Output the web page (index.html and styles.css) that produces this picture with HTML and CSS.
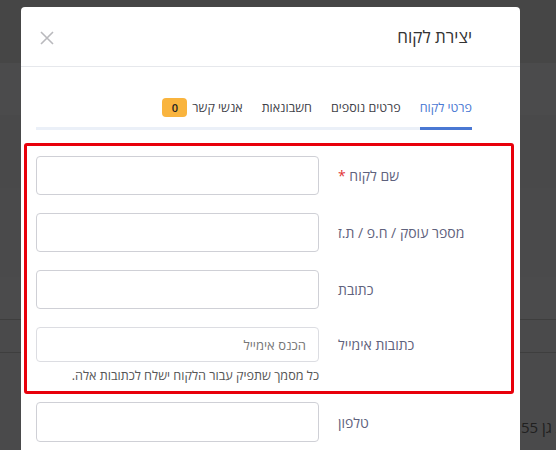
FILE: index.html
```
<!DOCTYPE html>
<html lang="he" dir="rtl">
<head>
<meta charset="utf-8">
<link rel="stylesheet" href="styles.css">
</head>
<body>
<div class="backdrop">
  <div class="band b1"></div>
  <div class="band b2"></div>
  <div class="band b3"></div>
  <div class="band b4"></div>
  <div class="band b5"></div>
  <div class="band b6"></div>
  <div class="band b7"></div>
  <div class="band b8"><span class="behind">רמת גן 55</span></div>
</div>

<div class="modal">
  <div class="modal-header">
    <h1 class="title">יצירת לקוח</h1>
    <svg class="close" width="14" height="14" viewBox="0 0 14 14"><path d="M1 1L13 13M13 1L1 13" stroke="#b9b9bd" stroke-width="1.6" fill="none"/></svg>
  </div>
  <div class="modal-body">
    <ul class="tabs">
      <li class="tab active">פרטי לקוח</li>
      <li class="tab">פרטים נוספים</li>
      <li class="tab">חשבונאות</li>
      <li class="tab">אנשי קשר <span class="badge">0</span></li>
    </ul>
    <form class="form">
      <div class="row">
        <label class="label">שם לקוח <span class="req">*</span></label>
        <input class="input" type="text">
      </div>
      <div class="row">
        <label class="label">מספר עוסק / ח.פ / ת.ז</label>
        <input class="input" type="text">
      </div>
      <div class="row">
        <label class="label">כתובת</label>
        <input class="input" type="text">
      </div>
      <div class="row email-row">
        <label class="label">כתובות אימייל</label>
        <div class="field">
          <input class="input input-sm" type="text" placeholder="הכנס אימייל">
          <div class="help">כל מסמך שתפיק עבור הלקוח ישלח לכתובות אלה.</div>
        </div>
      </div>
      <div class="row phone-row">
        <label class="label">טלפון</label>
        <input class="input" type="text">
      </div>
    </form>
  </div>
  <div class="highlight"></div>
</div>
</body>
</html>
```
FILE: styles.css
```
* { box-sizing: border-box; }
html, body { margin: 0; padding: 0; }
body {
  width: 556px;
  height: 450px;
  overflow: hidden;
  background: #4a4a4b;
  font-family: "Open Sans", "Liberation Sans", sans-serif;
  position: relative;
}
.backdrop { display: flex; flex-direction: column; }
.band { width: 100%; }
.b1 { height: 63px; background: #464646; }
.b2 { height: 52px; background: #4b4b4c; }
.b3 { height: 73px; background: #49494a; }
.b4 { height: 89px; background: #4a4a4b; }
.b5 { height: 43px; background: #4b4b4c; border-bottom: 1px solid #3e3e3e; }
.b6 { height: 33px; background: #4a4a4b; border-bottom: 1px solid #3e3e3e; }
.b7 { height: 59px; background: #4a4a4b; }
.b8 { height: 40px; background: #4a4a4b; position: relative; }
.behind {
  position: absolute;
  left: 521px;
  top: 5px;
  white-space: nowrap;
  color: #202020;
  font-size: 15px;
  direction: rtl;
}

.modal {
  position: absolute;
  left: 21px;
  top: 7px;
  width: 499px;
  height: 460px;
  background: #fff;
  border-radius: 4px;
}
.modal-header {
  height: 60px;
  border-bottom: 1px solid #e6e8ec;
  display: flex;
  align-items: center;
  justify-content: space-between;
  padding: 0 48px 0 19px;
}
.title {
  margin: 0;
  font-size: 17px;
  font-weight: 400;
  color: #333;
}
.close { display: block; margin-top: 2px; }

.modal-body { padding: 20px 48px 0 15px; }
.tabs {
  list-style: none;
  margin: 0;
  padding: 0;
  display: flex;
  border-bottom: 3px solid #ebf0f8;
  height: 43px;
}
.tab {
  font-size: 12.5px;
  font-weight: 500;
  color: #3f4249;
  padding: 12px 0 0;
  margin-left: 19px;
  display: flex;
  align-items: flex-start;
  gap: 5px;
  height: 43px;
}
.tab.active {
  color: #4a78d3;
  border-bottom: 3px solid #4a78d3;
  margin-bottom: -3px;
}
.badge {
  display: inline-block;
  background: #f9b43e;
  color: #222;
  font-size: 11px;
  font-weight: 600;
  border-radius: 4px;
  width: 25px;
  height: 19px;
  line-height: 19px;
  text-align: center;
  margin-top: -1px;
}

.form {
  margin-top: 26px;
  display: flex;
  flex-direction: column;
  gap: 18px;
}
.row {
  display: grid;
  grid-template-columns: 134px 283px;
  column-gap: 19px;
  align-items: center;
}
.label {
  text-align: left;
  font-size: 14px;
  color: #5f627d;
  white-space: nowrap;
}
.req { color: #e23636; }
.input {
  display: block;
  width: 283px;
  height: 39px;
  border: 1px solid #cfd0d6;
  border-radius: 4px;
  background: #fff;
  font: inherit;
  font-size: 13px;
  padding: 0 12px;
  direction: rtl;
}
.input-sm { height: 35px; border-color: #dcdde2; }
.input::placeholder { color: #777; }
.email-row { align-items: start; }
.email-row .label { padding-top: 8px; }
.help {
  font-size: 12.6px;
  line-height: 17px;
  color: #555;
  margin-top: 5px;
  text-align: right;
}
.phone-row .input { height: 40px; }

.highlight {
  position: absolute;
  left: 3px;
  top: 136px;
  width: 490px;
  height: 251px;
  border: 3px solid #e8000b;
  border-radius: 3px;
  pointer-events: none;
}
```
